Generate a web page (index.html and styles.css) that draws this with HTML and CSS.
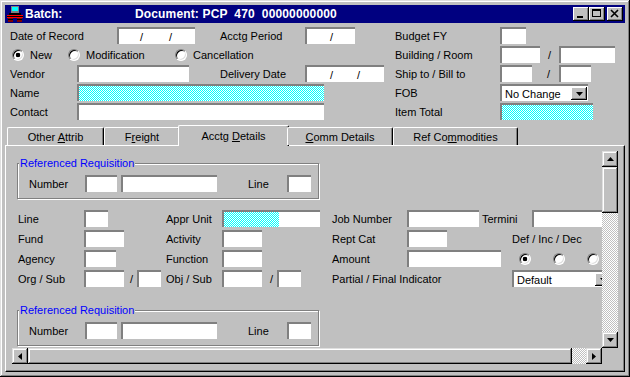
FILE: index.html
```html
<!DOCTYPE html>
<html lang="en">
<head>
    <meta charset="UTF-8">
    <meta name="viewport" content="width=device-width, initial-scale=1.0">
    <title>Batch: Document PCP 470</title>
    <link rel="stylesheet" href="styles.css">
</head>
<body>
    <!-- shared dither patterns for read-only fields and scroll tracks -->
    <svg class="defs" width="0" height="0">
        <defs>
            <pattern id="dither-cyan" width="2" height="2" patternUnits="userSpaceOnUse">
                <rect width="2" height="2" fill="#fff" shape-rendering="crispEdges"/>
                <rect x="1" width="1" height="1" fill="#00ffff" shape-rendering="crispEdges"/>
                <rect y="1" width="1" height="1" fill="#00ffff" shape-rendering="crispEdges"/>
            </pattern>
            <pattern id="dither-gray" width="2" height="2" patternUnits="userSpaceOnUse">
                <rect width="2" height="2" fill="#c0c0c0" shape-rendering="crispEdges"/>
                <rect width="1" height="1" fill="#fff" shape-rendering="crispEdges"/>
                <rect x="1" y="1" width="1" height="1" fill="#fff" shape-rendering="crispEdges"/>
            </pattern>
        </defs>
    </svg>

    <div class="window">
        <div class="titlebar">
            <svg class="app-icon" width="16" height="16" viewBox="0 0 16 16">
                <rect x="4" y="0" width="8" height="7" fill="#808080"/>
                <rect x="5" y="1" width="6" height="4" fill="#00ffff"/>
                <rect x="2" y="7" width="12" height="2" fill="#000"/>
                <rect x="0" y="9" width="16" height="3" fill="#ff0000"/>
                <rect x="1" y="12" width="5" height="4" fill="#800000"/>
                <rect x="10" y="12" width="5" height="4" fill="#800000"/>
                <path d="M1 13.5h5M10 13.5h5M0 10.5h16" stroke="#000" stroke-width="1"/>
            </svg>
            <span class="title-batch">Batch:</span>
            <span class="title-doc">Document: PCP  470  00000000000</span>
            <div class="caption-btns">
                <div class="cap-btn">
                    <svg width="16" height="14" viewBox="0 0 16 14"><rect x="4" y="9" width="6" height="2"/></svg>
                </div>
                <div class="cap-btn">
                    <svg width="16" height="14" viewBox="0 0 16 14"><rect x="3.5" y="2.5" width="8" height="7" fill="none" stroke="#000"/><rect x="3" y="2" width="9" height="2"/></svg>
                </div>
                <div class="cap-btn close">
                    <svg width="16" height="14" viewBox="0 0 16 14"><path d="M4 3l7 7M11 3l-7 7" stroke="#000" stroke-width="1.6"/></svg>
                </div>
            </div>
        </div>

        <!-- document header -->
        <div class="header">
            <div class="cell"><span class="lbl l107">Date of Record</span><div class="fld w78 date"><span>/</span><span>/</span></div></div>
            <div class="cell"><span class="lbl l85">Acctg Period</span><div class="fld w50 period"><span>/</span></div></div>
            <div class="cell"><span class="lbl l105">Budget FY</span><div class="fld w26"></div></div>

            <div class="cell span2">
                <label class="opt opt-new"><span class="radio on"></span>New</label>
                <label class="opt opt-mod"><span class="radio"></span>Modification</label>
                <label class="opt"><span class="radio"></span>Cancellation</label>
            </div>
            <div class="cell"><span class="lbl l105">Building / Room</span><div class="fld w40"></div><span class="sep sep-room">/</span><div class="fld w56"></div></div>

            <div class="cell"><span class="lbl l67">Vendor</span><div class="fld w112"></div></div>
            <div class="cell"><span class="lbl l85">Delivery Date</span><div class="fld w79 ddate"><span>/</span><span>/</span></div></div>
            <div class="cell"><span class="lbl l105">Ship to / Bill to</span><div class="fld w32"></div><span class="sep sep-ship">/</span><div class="fld w32"></div></div>

            <div class="cell span2"><span class="lbl l67">Name</span>
                <div class="fld w247"><svg class="dither"><rect width="100%" height="100%" fill="url(#dither-cyan)"/></svg></div>
            </div>
            <div class="cell"><span class="lbl l105">FOB</span>
                <div class="fld select w88"><span>No Change</span>
                    <span class="dd-btn"><svg width="7" height="4" viewBox="0 0 7 4"><path d="M0 0h7L3.5 4z"/></svg></span>
                </div>
            </div>

            <div class="cell span2"><span class="lbl l67">Contact</span><div class="fld w247"></div></div>
            <div class="cell"><span class="lbl l105">Item Total</span>
                <div class="fld w93"><svg class="dither"><rect width="100%" height="100%" fill="url(#dither-cyan)"/></svg></div>
            </div>
        </div>

        <div class="tabs">
            <div class="tab t1"><span>Other <u>A</u>ttrib</span></div>
            <div class="tab t2"><span>F<u>r</u>eight</span></div>
            <div class="tab t3 active"><span>Acctg <u>D</u>etails</span></div>
            <div class="tab t4"><span><u>C</u>omm Details</span></div>
            <div class="tab t5"><span>Ref Co<u>m</u>modities</span></div>
        </div>

        <div class="panel">
            <div class="scroller">
                <div class="view">
                    <div class="view-inner">
                        <div class="group">
                            <div class="group-title">Referenced Requisition</div>
                            <div class="group-row">
                                <span class="lbl l56">Number</span>
                                <div class="fld w32"></div>
                                <div class="fld w96 gap4"></div>
                                <span class="lbl l39 gap31">Line</span>
                                <div class="fld w24"></div>
                            </div>
                        </div>

                        <div class="fields">
                            <div class="cell"><span class="lbl l66">Line</span><div class="fld w24"></div></div>
                            <div class="cell"><span class="lbl l56">Appr Unit</span>
                                <div class="fld w98"><svg class="dither part"><rect width="100%" height="100%" fill="url(#dither-cyan)"/></svg></div>
                            </div>
                            <div class="cell"><span class="lbl l75">Job Number</span><div class="fld w72"></div></div>
                            <div class="cell"><span class="lbl l50">Termini</span><div class="fld w100"></div></div>

                            <div class="cell"><span class="lbl l66">Fund</span><div class="fld w40"></div></div>
                            <div class="cell"><span class="lbl l56">Activity</span><div class="fld w40"></div></div>
                            <div class="cell"><span class="lbl l75">Rept Cat</span><div class="fld w40"></div></div>
                            <div class="cell"><span class="lbl indent30">Def / Inc / Dec</span></div>

                            <div class="cell"><span class="lbl l66">Agency</span><div class="fld w32"></div></div>
                            <div class="cell"><span class="lbl l56">Function</span><div class="fld w40"></div></div>
                            <div class="cell"><span class="lbl l75">Amount</span><div class="fld w94"></div></div>
                            <div class="cell tri"><span class="radio on"></span><span class="radio"></span><span class="radio"></span></div>

                            <div class="cell"><span class="lbl l66">Org / Sub</span><div class="fld w40"></div><span class="sep sep-org">/</span><div class="fld w24"></div></div>
                            <div class="cell"><span class="lbl l56">Obj / Sub</span><div class="fld w40"></div><span class="sep sep-obj">/</span><div class="fld w24"></div></div>
                            <div class="cell"><span class="lbl">Partial / Final Indicator</span></div>
                            <div class="cell">
                                <div class="fld select w100 indent30"><span>Default</span>
                                    <span class="dd-btn"><svg width="7" height="4" viewBox="0 0 7 4"><path d="M0 0h7L3.5 4z"/></svg></span>
                                </div>
                            </div>
                        </div>

                        <div class="group group-2">
                            <div class="group-title">Referenced Requisition</div>
                            <div class="group-row">
                                <span class="lbl l56">Number</span>
                                <div class="fld w32"></div>
                                <div class="fld w96 gap4"></div>
                                <span class="lbl l39 gap31">Line</span>
                                <div class="fld w24"></div>
                            </div>
                        </div>
                    </div>
                </div>

                <div class="vscroll">
                    <div class="sb-btn"><svg width="7" height="4" viewBox="0 0 7 4"><path d="M0 4h7L3.5 0z"/></svg></div>
                    <div class="sb-thumb v-thumb"></div>
                    <svg class="sb-track"><rect width="100%" height="100%" fill="url(#dither-gray)"/></svg>
                    <div class="sb-btn"><svg width="7" height="4" viewBox="0 0 7 4"><path d="M0 0h7L3.5 4z"/></svg></div>
                </div>

                <div class="hscroll">
                    <div class="sb-btn"><svg width="4" height="7" viewBox="0 0 4 7"><path d="M4 0v7L0 3.5z"/></svg></div>
                    <div class="sb-thumb h-thumb"></div>
                    <svg class="sb-track"><rect width="100%" height="100%" fill="url(#dither-gray)"/></svg>
                    <div class="sb-btn"><svg width="4" height="7" viewBox="0 0 4 7"><path d="M0 0v7L4 3.5z"/></svg></div>
                </div>

                <div class="corner"></div>
            </div>
        </div>
    </div>
</body>
</html>
```

FILE: styles.css
```css
* {
    margin: 0;
    padding: 0;
    box-sizing: border-box;
}

body {
    width: 630px;
    height: 377px;
    overflow: hidden;
    font-family: 'Liberation Sans', Arial, sans-serif;
    font-size: 11px;
    color: #000;
    background: #c0c0c0;
}

.defs {
    position: absolute;
    width: 0;
    height: 0;
}

.window {
    width: 630px;
    height: 377px;
    display: flex;
    flex-direction: column;
    padding: 5px;
    background: #c0c0c0;
    box-shadow: inset -1px -1px #000, inset 1px 1px #dfdfdf, inset -2px -2px #808080, inset 2px 2px #fff;
}

/* title bar */
.titlebar {
    height: 18px;
    flex-shrink: 0;
    display: flex;
    align-items: center;
    background: #000080;
    color: #fff;
    font-weight: bold;
    font-size: 12px;
}

.app-icon {
    margin-left: 2px;
    flex-shrink: 0;
}

.title-batch {
    width: 110px;
    margin-left: 2px;
}

.title-doc {
    flex: 1;
    white-space: pre;
    letter-spacing: 0.15px;
}

.caption-btns {
    display: flex;
    margin-right: 2px;
}

.cap-btn {
    width: 16px;
    height: 14px;
    background: #c0c0c0;
    box-shadow: inset -1px -1px #000, inset 1px 1px #fff, inset -2px -2px #808080;
}

.cap-btn svg {
    display: block;
}

.cap-btn.close {
    margin-left: 2px;
}

/* header form */
.header {
    flex-shrink: 0;
    display: grid;
    grid-template-columns: 210px 175px 1fr;
    grid-template-rows: 17px 17px 17px 17px 17px;
    row-gap: 2px;
    padding: 4px 0 5px 5px;
}

.cell {
    display: flex;
    align-items: center;
    white-space: nowrap;
}

.span2 {
    grid-column: span 2;
}

.lbl {
    flex-shrink: 0;
    white-space: nowrap;
}

.l39 { width: 39px; }
.l50 { width: 50px; }
.l56 { width: 56px; }
.l66 { width: 66px; }
.l67 { width: 67px; }
.l75 { width: 75px; }
.l85 { width: 85px; }
.l105 { width: 105px; }
.l107 { width: 107px; }

.fld {
    height: 17px;
    flex-shrink: 0;
    display: flex;
    align-items: center;
    background: #fff;
    border-top: 2px solid #808080;
    border-left: 2px solid #808080;
}

.w24 { width: 24px; }
.w26 { width: 26px; }
.w32 { width: 32px; }
.w40 { width: 40px; }
.w50 { width: 50px; }
.w56 { width: 56px; }
.w72 { width: 72px; }
.w78 { width: 78px; }
.w79 { width: 79px; }
.w88 { width: 88px; }
.w93 { width: 93px; }
.w94 { width: 94px; }
.w96 { width: 96px; }
.w98 { width: 98px; }
.w100 { width: 100px; }
.w112 { width: 112px; }
.w247 { width: 247px; }

.gap4 { margin-left: 4px; }
.gap31 { margin-left: 31px; }
.indent30 { margin-left: 30px; }

.date { padding-left: 21px; }
.date span + span { margin-left: 26px; }
.period { padding-left: 23px; }
.ddate { padding-left: 23px; }
.ddate span + span { margin-left: 24px; }

.dither {
    display: block;
    flex: 1;
    align-self: stretch;
    height: 15px;
    shape-rendering: crispEdges;
}

.dither.part {
    flex: none;
    width: 55px;
}

.sep-room { margin: 0 8px; }
.sep-ship { margin: 0 9px 0 15px; }
.sep-org { margin: 0 4px 0 6px; }
.sep-obj { margin: 0 4px 0 8px; }

.select {
    justify-content: space-between;
    padding-left: 3px;
}

.dd-btn {
    width: 16px;
    height: 13px;
    margin-right: 1px;
    display: flex;
    align-items: center;
    justify-content: center;
    background: #c0c0c0;
    box-shadow: inset -1px -1px #000, inset 1px 1px #fff, inset -2px -2px #808080;
}

/* radio buttons */
.opt {
    display: flex;
    align-items: center;
    gap: 6px;
}

.opt-new {
    width: 56px;
    margin-left: 2px;
}

.opt-mod {
    width: 107px;
}

.radio {
    width: 12px;
    height: 12px;
    flex-shrink: 0;
    border-radius: 50%;
    border: 1px solid;
    border-color: #808080 #fff #fff #808080;
    box-shadow: inset 1px 1px #000, inset -1px -1px #dfdfdf;
    background: #fff;
}

.radio.on {
    background: radial-gradient(circle, #000 0 2px, #fff 2.6px);
}

.tri {
    padding-left: 37px;
    gap: 22px;
}

/* tabs */
.tabs {
    position: relative;
    z-index: 1;
    flex-shrink: 0;
    height: 20px;
    display: flex;
    align-items: flex-end;
    padding-left: 2px;
}

.tab {
    height: 18px;
    display: flex;
    align-items: center;
    justify-content: center;
    white-space: pre;
    background: #c0c0c0;
    border-top: 1px solid #fff;
    border-left: 1px solid #fff;
    border-right: 1px solid #000;
    border-radius: 2px 2px 0 0;
    box-shadow: inset -1px 0 #808080;
}

.t1 { width: 97px; }
.t2 { width: 76px; }
.t3 { width: 111px; }
.t4 { width: 106px; }
.t5 { width: 125px; }

.tab.active {
    height: 21px;
    margin: 0 -2px -1px;
    padding-bottom: 1px;
}

/* tab panel */
.panel {
    flex: 1;
    min-height: 0;
    border-top: 1px solid #fff;
    border-left: 1px solid #fff;
    border-right: 1px solid #000;
    border-bottom: 1px solid #000;
    box-shadow: inset -1px -1px #808080;
    padding: 5px 5px 6px 6px;
}

.scroller {
    display: grid;
    grid-template-columns: 590px 16px;
    grid-template-rows: 197px 16px;
}

.view {
    overflow: hidden;
}

.view-inner {
    width: 720px;
    padding: 12px 0 0 6px;
}

.group {
    width: 302px;
    margin-left: -1px;
    border: 1px solid #808080;
    box-shadow: inset 1px 1px #fff, 1px 1px #fff;
    padding: 0 0 6px 11px;
}

.group-2 {
    margin-top: 23px;
}

.group-title {
    width: max-content;
    margin: -7px 0 0 -10px;
    padding: 0 1px;
    line-height: 13px;
    background: #c0c0c0;
    color: #0000ff;
}

.group-row {
    display: flex;
    align-items: center;
    margin-top: 5px;
}

.fields {
    display: grid;
    grid-template-columns: 148px 166px 150px 250px;
    grid-auto-rows: 17px;
    row-gap: 3px;
    margin-top: 11px;
}

/* scroll bars */
.vscroll {
    display: flex;
    flex-direction: column;
}

.hscroll {
    display: flex;
}

.sb-btn {
    width: 16px;
    height: 16px;
    flex-shrink: 0;
    display: flex;
    align-items: center;
    justify-content: center;
    background: #c0c0c0;
    box-shadow: inset -1px -1px #000, inset 1px 1px #dfdfdf, inset -2px -2px #808080, inset 2px 2px #fff;
}

.sb-thumb {
    flex-shrink: 0;
    background: #c0c0c0;
    box-shadow: inset -1px -1px #000, inset 1px 1px #dfdfdf, inset -2px -2px #808080, inset 2px 2px #fff;
}

.v-thumb { height: 46px; }
.h-thumb { width: 544px; }

.sb-track {
    display: block;
    flex: 1;
    min-width: 0;
    min-height: 0;
    shape-rendering: crispEdges;
}

.hscroll .sb-track {
    height: 100%;
}

.vscroll .sb-track {
    width: 100%;
}

.corner {
    background: #c0c0c0;
}
```
